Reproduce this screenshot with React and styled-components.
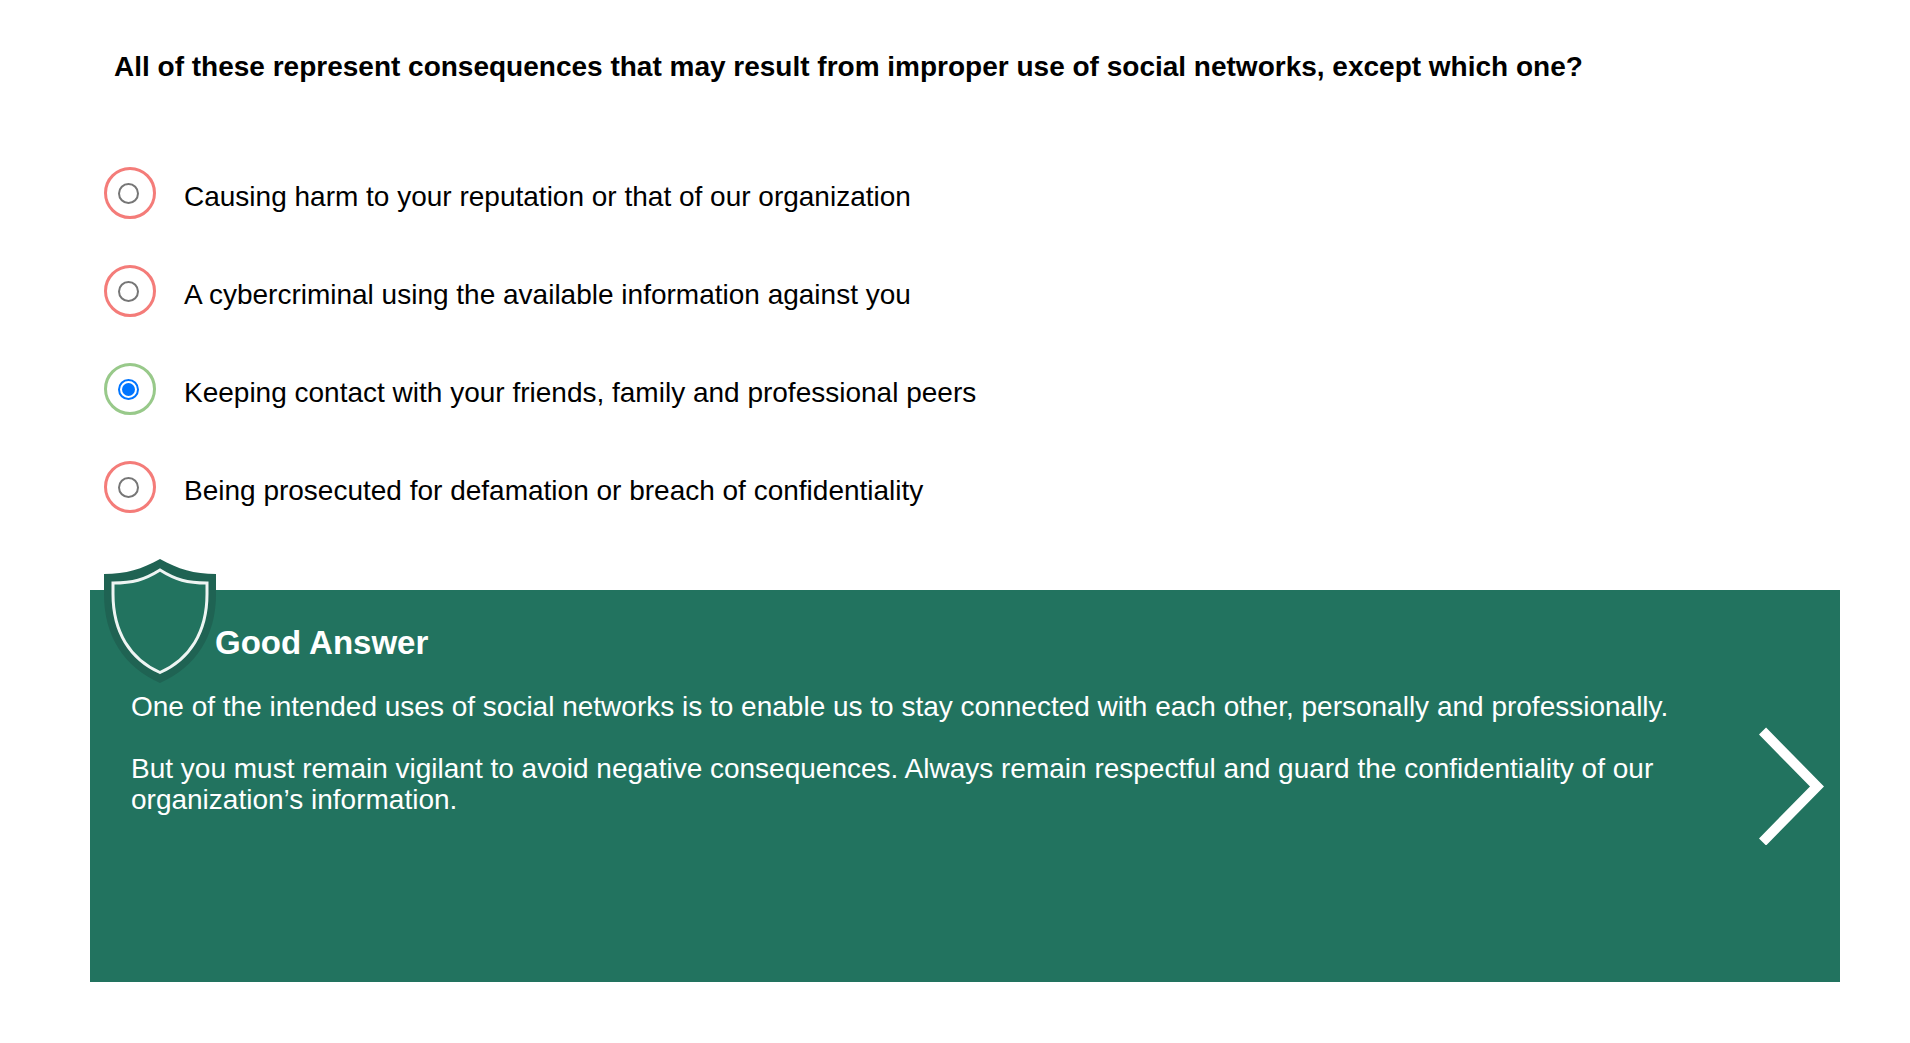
import React, { useState } from "react";
import styled, { createGlobalStyle } from "styled-components";

const GlobalStyle = createGlobalStyle`
  *, *::before, *::after { box-sizing: border-box; }
  body {
    margin: 0;
    background: #ffffff;
    color: #000000;
    font-family: "Liberation Sans", Arial, Helvetica, sans-serif;
  }
`;

const Page = styled.main`
  padding: 51px 70px 60px 90px;
`;

const Question = styled.fieldset`
  margin: 0;
  padding: 0;
  border: 0;
  min-width: 0;
`;

const Prompt = styled.legend`
  padding: 0 24px;
  margin-bottom: 61px;
  font-size: 28px;
  line-height: 32px;
  font-weight: 700;
`;

const Option = styled.label`
  display: flex;
  align-items: center;
  gap: 28px;
  min-height: 98px;
  padding-left: 14px;
  cursor: pointer;
`;

const Ring = styled.span`
  display: flex;
  flex: none;
  align-items: center;
  justify-content: center;
  width: 52px;
  height: 52px;
  padding-right: 3px;
  border: 3px solid ${({ $correct }) => ($correct ? "#98c98a" : "#f47c79")};
  border-radius: 50%;
`;

const Radio = styled.input`
  appearance: none;
  display: grid;
  place-items: center;
  width: 21px;
  height: 21px;
  margin: 0;
  border: 2px solid #767676;
  border-radius: 50%;
  background: #ffffff;
  cursor: pointer;

  &:checked {
    border-color: #0075ff;
  }

  &:checked::before {
    content: "";
    width: 13px;
    height: 13px;
    border-radius: 50%;
    background: #0075ff;
  }
`;

const OptionText = styled.span`
  padding-top: 8px;
  font-size: 28px;
  line-height: 32px;
`;

const Feedback = styled.section`
  position: relative;
  display: flex;
  align-items: center;
  justify-content: space-between;
  gap: 24px;
  min-height: 392px;
  margin-top: 54px;
  padding-right: 16px;
  background: #22735f;
  color: #ffffff;
`;

const Shield = styled.svg`
  position: absolute;
  top: -32px;
  left: 14px;
  width: 112px;
  height: 125px;
`;

const Message = styled.div`
  flex: 1;
  align-self: stretch;
  padding: 34px 0 34px 41px;
`;

const Verdict = styled.h2`
  margin: 0 0 29px;
  padding-left: 84px;
  font-size: 33px;
  line-height: 38px;
  font-weight: 700;
`;

const Paragraph = styled.p`
  margin: 0 0 31px;
  font-size: 28px;
  line-height: 31px;
`;

const NextButton = styled.button`
  flex: none;
  padding: 0;
  border: 0;
  background: none;
  color: inherit;
  cursor: pointer;

  svg {
    display: block;
    width: 65px;
    height: 118px;
  }
`;

const options = [
  { text: "Causing harm to your reputation or that of our organization", correct: false },
  { text: "A cybercriminal using the available information against you", correct: false },
  { text: "Keeping contact with your friends, family and professional peers", correct: true },
  { text: "Being prosecuted for defamation or breach of confidentiality", correct: false },
];

export default function App() {
  const [selected, setSelected] = useState(2);

  return (
    <>
      <GlobalStyle />
      <Page>
        <Question>
          <Prompt>
            All of these represent consequences that may result from improper use of social
            networks, except which one?
          </Prompt>
          {options.map((option, index) => (
            <Option key={option.text}>
              <Ring $correct={option.correct}>
                <Radio
                  type="radio"
                  name="answer"
                  checked={selected === index}
                  onChange={() => setSelected(index)}
                />
              </Ring>
              <OptionText>{option.text}</OptionText>
            </Option>
          ))}
        </Question>

        <Feedback>
          <Shield viewBox="0 0 112 125" aria-hidden="true">
            <path
              d="M56 1C38 11 22 16 0 16V36C0 78 20 109 56 125C92 109 112 78 112 36V16C90 16 74 11 56 1Z"
              fill="#1f6353"
            />
            <path
              d="M56 12C40 22 29 25 9 25V36C9 74 26 101 56 114.500C86 101 103 74 103 36V25C83 25 72 22 56 12Z"
              fill="#22735f"
              stroke="#eef5f3"
              strokeWidth="3"
            />
          </Shield>
          <Message>
            <Verdict>Good Answer</Verdict>
            <Paragraph>
              One of the intended uses of social networks is to enable us to stay connected with
              each other, personally and professionally.
            </Paragraph>
            <Paragraph>
              But you must remain vigilant to avoid negative consequences. Always remain respectful
              and guard the confidentiality of our organization’s information.
            </Paragraph>
          </Message>
          <NextButton type="button" aria-label="Next">
            <svg viewBox="0 0 65 118" aria-hidden="true">
              <path d="M3.500 4L58 59.500L3.500 115" fill="none" stroke="currentColor" strokeWidth="10" />
            </svg>
          </NextButton>
        </Feedback>
      </Page>
    </>
  );
}
